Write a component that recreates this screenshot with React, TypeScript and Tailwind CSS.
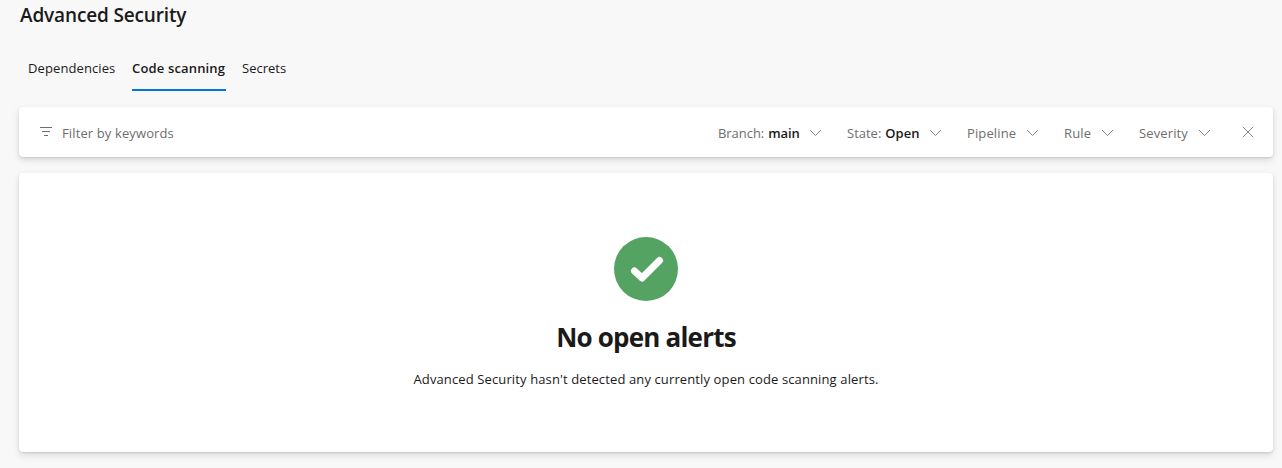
function Chevron() {
  return (
    <svg className="mt-px h-[8px] w-[13px] shrink-0" viewBox="0 0 13 8" fill="none" stroke="#858585">
      <path d="M1 1L6.5 6.5L12 1" />
    </svg>
  );
}

function Filter({ label, value, width, tracking }: { label: string; value?: string; width: string; tracking: string }) {
  return (
    <button className={`flex shrink-0 items-center ${width}`}>
      <span className={`flex flex-1 gap-1 whitespace-nowrap ${tracking}`}>
        <span>{label}</span>
        {value && <span className="font-semibold text-[#1b1a19]">{value}</span>}
      </span>
      <Chevron />
    </button>
  );
}

export default function App() {
  return (
    <main className="flex h-[468px] w-full flex-col bg-[#f8f8f8] pr-[9px] pl-[19px] font-['Open_Sans',sans-serif] text-[13px] leading-5 text-[#1b1a19]">
      <h1 className="h-[45px] pt-[3px] pl-px text-[19px] leading-6 font-semibold tracking-[-0.15px]">Advanced Security</h1>
      <nav className="flex h-[46px] items-stretch gap-4 pl-[9px] whitespace-nowrap">
        <button className="flex w-[88px] pt-[13px] tracking-[0.1px]">Dependencies</button>
        <button className="flex w-[94px] border-b-2 border-[#0078d4] pt-[13px] font-semibold tracking-[0.16px]">Code scanning</button>
        <button className="flex w-[45px] pt-[13px]">Secrets</button>
      </nav>
      <section className="mt-4 flex h-[50px] shrink-0 items-center rounded bg-white pt-px pr-[19px] pl-[21px] text-[#6e6e6e] shadow-[0_3px_7px_rgba(0,0,0,0.13),0_1px_2px_rgba(0,0,0,0.11)]">
        <svg className="mb-[3px] h-[9px] w-3" viewBox="0 0 12 9" stroke="#6e6e6e">
          <path d="M0 .5H12M2 4.5H10M4 8.5H8" />
        </svg>
        <span className="ml-[10px] flex-1 tracking-[0.12px]">Filter by keywords</span>
        <div className="flex items-center gap-[25px]">
          <Filter label="Branch:" value="main" width="w-[104px]" tracking="tracking-[-0.05px]" />
          <Filter label="State:" value="Open" width="w-[95px]" tracking="tracking-normal" />
          <Filter label="Pipeline" width="w-[72px]" tracking="tracking-[0.12px]" />
          <Filter label="Rule" width="w-[50px]" tracking="tracking-[0.12px]" />
          <Filter label="Severity" width="w-[72px]" tracking="tracking-[0.12px]" />
        </div>
        <button className="mb-[2px] ml-[31px]" aria-label="Clear filters">
          <svg className="block h-3 w-3" viewBox="0 0 12 12" stroke="#858585">
            <path d="M.8 .8L11.2 11.2M11.2 .8L.8 11.2" />
          </svg>
        </button>
      </section>
      <section className="mt-4 flex h-[279px] shrink-0 flex-col items-center rounded bg-white pt-16 shadow-[0_3px_7px_rgba(0,0,0,0.13),0_1px_2px_rgba(0,0,0,0.11)]">
        <svg className="h-16 w-16" viewBox="0 0 64 64" fill="none">
          <circle cx="32" cy="32" r="32" fill="#55a362" />
          <path d="M20.5 34L28 41L45.5 23.5" stroke="white" strokeWidth="7" strokeLinecap="round" strokeLinejoin="round" />
        </svg>
        <h2 className="mt-5 text-[26px] leading-8 font-bold tracking-[-0.8px] whitespace-nowrap">No open alerts</h2>
        <p className="mt-4 tracking-[0.12px] whitespace-nowrap">Advanced Security hasn't detected any currently open code scanning alerts.</p>
      </section>
    </main>
  );
}
